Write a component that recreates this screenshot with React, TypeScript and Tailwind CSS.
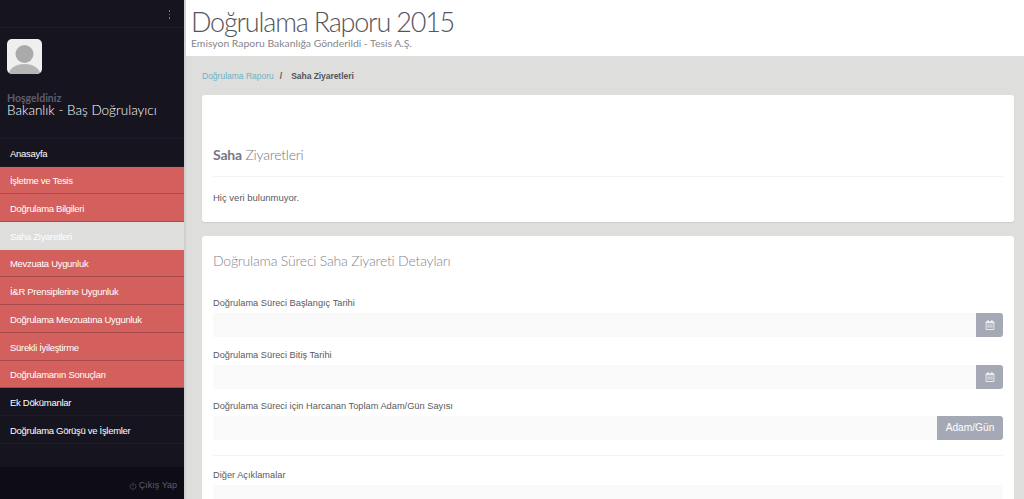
import { FaRegCalendarAlt } from "react-icons/fa"
import { Power } from "lucide-react"

const menuItems = [
  { label: "Anasayfa", kind: "dark" },
  { label: "İşletme ve Tesis", kind: "red" },
  { label: "Doğrulama Bilgileri", kind: "red" },
  { label: "Saha Ziyaretleri", kind: "active" },
  { label: "Mevzuata Uygunluk", kind: "red" },
  { label: "İ&R Prensiplerine Uygunluk", kind: "red" },
  { label: "Doğrulama Mevzuatına Uygunluk", kind: "red" },
  { label: "Sürekli İyileştirme", kind: "red" },
  { label: "Doğrulamanın Sonuçları", kind: "red" },
  { label: "Ek Dökümanlar", kind: "dark" },
  { label: "Doğrulama Görüşü ve İşlemler", kind: "dark" },
]

const kindClasses: Record<string, string> = {
  dark: "bg-[#16141f] text-white border-b border-[#1d1b27]",
  red: "bg-[#d4605e] text-white border-b border-[#a84a49]",
  active: "bg-[#dededc] text-white border-b border-[#dededc]",
}

function Sidebar() {
  return (
    <aside className="w-[184px] shrink-0 h-full flex flex-col bg-[#16141f]">
      <div className="h-[28px] shrink-0 flex items-center justify-end pr-[14px] border-b border-[#1d1b27]">
        <div className="flex flex-col gap-[2px] pt-[2px]">
          <span className="w-[1.5px] h-[1.5px] bg-[#77767e]" />
          <span className="w-[1.5px] h-[1.5px] bg-[#77767e]" />
          <span className="w-[1.5px] h-[1.5px] bg-[#77767e]" />
        </div>
      </div>
      <div className="h-[111px] shrink-0 px-[7px] pt-[11px] border-b border-[#1d1b27]">
        <div className="w-[35px] h-[35px] rounded-[5px] overflow-hidden bg-[#efefef]">
          <svg viewBox="0 0 35 35" className="w-full h-full">
            <circle cx="17.5" cy="15" r="9" fill="#aaaaaa" />
            <ellipse cx="17.5" cy="36" rx="16" ry="11" fill="#b5b5b5" />
          </svg>
        </div>
        <div className="mt-[19px] text-[10.5px] leading-[11px] font-bold text-[#5f5e6b] font-['Lato',sans-serif]">
          Hoşgeldiniz
        </div>
        <div className="text-[13.5px] leading-[13px] text-white font-['Lato',sans-serif] font-light">
          Bakanlık - Baş Doğrulayıcı
        </div>
      </div>
      <nav className="flex flex-col">
        {menuItems.map((item) => (
          <div
            key={item.label}
            className={`h-[27.7px] flex items-center pl-[10px] pt-[3px] text-[9.5px] tracking-[-0.3px] font-['Liberation_Sans',sans-serif] ${kindClasses[item.kind]}`}
          >
            {item.label}
          </div>
        ))}
      </nav>
      <div className="flex-1" />
      <div className="h-[32px] shrink-0 bg-[#0e0c16] flex items-center justify-end gap-[2px] pr-[7px] pt-[6px] text-[9px] text-[#5e5d66] font-['Liberation_Sans',sans-serif]">
        <Power size={8} strokeWidth={2} />
        Çıkış Yap
      </div>
    </aside>
  )
}

function InputRow({ label, addon }: { label: string; addon: React.ReactNode }) {
  return (
    <div>
      <div className="text-[9.25px] leading-[14px] text-[#5a5a60] font-['Liberation_Sans',sans-serif] mb-[3px] pt-[1px]">
        {label}
      </div>
      <div className="flex h-[24px]">
        <div className="flex-1 bg-[#f9f9f9]" />
        {addon}
      </div>
    </div>
  )
}

function CalendarAddon() {
  return (
    <div className="w-[27px] bg-[#a5a9b5] rounded-r-[3px] flex items-center justify-center text-[#eeeef0]">
      <FaRegCalendarAlt size={10} />
    </div>
  )
}

export default function App() {
  return (
    <div className="h-screen w-full flex overflow-hidden bg-[#dededc]">
      <Sidebar />
      <main className="flex-1 min-w-0 pl-[2px] bg-[#d0d0d0]">
        <header className="h-[56px] bg-white pl-[5px] pt-[6px]">
          <h1 className="text-[27px] leading-[31px] tracking-[-1.2px] font-light text-[#55555c] font-['Lato',sans-serif]">
            Doğrulama Raporu 2015
          </h1>
          <p className="text-[10.4px] leading-[12px] text-[#85858c] font-['Lato',sans-serif]">
            Emisyon Raporu Bakanlığa Gönderildi - Tesis A.Ş.
          </p>
        </header>
        <div className="h-full bg-[#dededc] pl-[16px] pr-[10px]">
          <div className="h-[39px] flex items-center gap-[6px] pt-[2px] text-[8.5px] font-['Liberation_Sans',sans-serif]">
            <span className="text-[#6fb3c6]">Doğrulama Raporu</span>
            <span className="text-[#55555c] font-bold pr-[3px]">/</span>
            <span className="text-[#55555c] font-bold tracking-[-0.05px]">Saha Ziyaretleri</span>
          </div>
          <section className="h-[127px] bg-white rounded-[3px] px-[11px] pt-[50px] mb-[14px] shadow-[0_1px_1px_rgba(0,0,0,0.08)]">
            <h2 className="text-[14px] leading-[20px] tracking-[-0.2px] pb-[11px] border-b border-[#f3f3f3] text-[#777785] font-light font-['Lato',sans-serif]">
              <span className="font-bold">Saha</span> Ziyaretleri
            </h2>
            <p className="mt-[14px] text-[9.5px] leading-[14px] text-[#5a5a60] font-['Liberation_Sans',sans-serif]">
              Hiç veri bulunmuyor.
            </p>
          </section>
          <section className="bg-white rounded-[3px] px-[11px] pt-[15px] h-[300px]">
            <h2 className="text-[14px] leading-[20px] tracking-[-0.2px] mb-[24px] text-[#85858f] font-light font-['Lato',sans-serif]">
              Doğrulama Süreci Saha Ziyareti Detayları
            </h2>
            <div className="flex flex-col gap-[9.5px]">
              <InputRow label="Doğrulama Süreci Başlangıç Tarihi" addon={<CalendarAddon />} />
              <InputRow label="Doğrulama Süreci Bitiş Tarihi" addon={<CalendarAddon />} />
              <InputRow
                label="Doğrulama Süreci için Harcanan Toplam Adam/Gün Sayısı"
                addon={
                  <div className="w-[66px] bg-[#a5a9b5] rounded-r-[3px] flex items-center justify-center text-white text-[10.2px] font-['Liberation_Sans',sans-serif]">
                    Adam/Gün
                  </div>
                }
              />
            </div>
            <div className="mt-[15px] border-t border-[#f3f3f3] pt-[11px]">
              <div className="text-[9.25px] leading-[14px] text-[#5a5a60] font-['Liberation_Sans',sans-serif] mb-[3px] pt-[1px]">
                Diğer Açıklamalar
              </div>
              <div className="h-[24px] bg-[#f9f9f9]" />
            </div>
          </section>
        </div>
      </main>
    </div>
  )
}
